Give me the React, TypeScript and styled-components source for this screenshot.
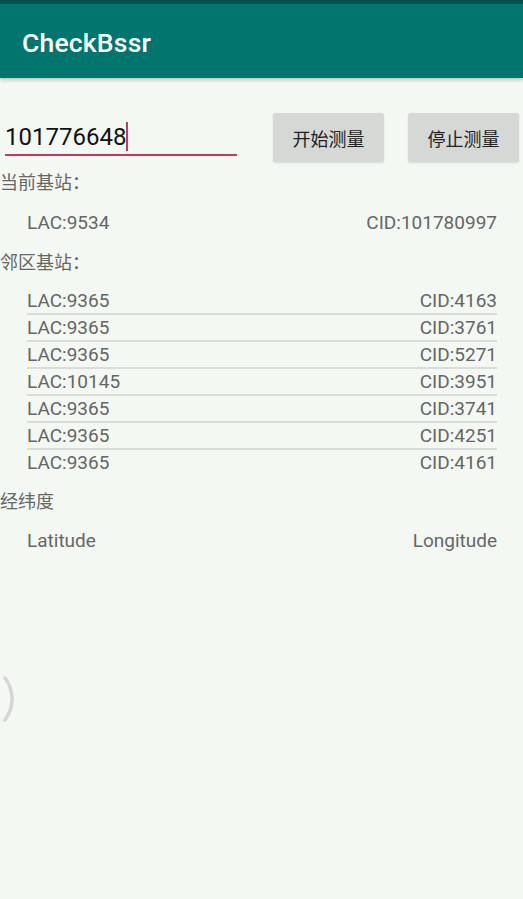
import React from 'react';
import styled, { createGlobalStyle } from 'styled-components';

const GlobalStyle = createGlobalStyle`
  html, body {
    margin: 0;
    padding: 0;
    background: #f3f8f3;
  }
  body {
    font-family: Roboto, "Noto Sans CJK SC", sans-serif;
  }
`;

const Screen = styled.div`
  width: 523px;
  min-height: 899px;
  background: #f3f8f3;
  display: flex;
  flex-direction: column;
`;

const StatusBar = styled.div`
  height: 4px;
  background: #00524c;
`;

const Toolbar = styled.header`
  height: 74px;
  background: #00766f;
  display: flex;
  align-items: center;
  padding: 2px 0 0 22px;
  box-sizing: border-box;
  box-shadow: 0 2px 4px rgba(0, 0, 0, 0.22);
`;

const Title = styled.h1`
  margin: 0;
  color: #ffffff;
  font-size: 26.5px;
  font-weight: 500;
  letter-spacing: 0.2px;
`;

const InputRow = styled.div`
  display: flex;
  align-items: flex-start;
  margin-top: 35px;
`;

const EditField = styled.div`
  margin-left: 5px;
  width: 232px;
  height: 43px;
  padding-top: 9px;
  box-sizing: border-box;
  border-bottom: 2px solid #c93565;
  display: flex;
  align-items: flex-start;
  font-size: 24px;
  line-height: 30px;
  color: #111;
`;

const Caret = styled.span`
  display: inline-block;
  width: 2px;
  height: 29px;
  margin-top: 0;
  background: #c93565;
`;

const ActionButton = styled.button<{ $gap: number }>`
  margin-left: ${(p) => p.$gap}px;
  width: 111px;
  height: 49px;
  border: none;
  border-radius: 2px;
  background: #d5d8d5;
  box-shadow: 0 1px 2px rgba(0, 0, 0, 0.12);
  font-family: Roboto, "Noto Sans CJK SC", sans-serif;
  font-size: 18px;
  color: #222;
  padding: 0;
`;

const SectionLabel = styled.div<{ $top: number }>`
  margin-top: ${(p) => p.$top}px;
  font-size: 18px;
  line-height: 24px;
  color: #666;
`;

const ValueRow = styled.div<{ $top?: number; $divider?: boolean }>`
  margin: ${(p) => p.$top ?? 0}px 26px 0 27px;
  display: flex;
  justify-content: space-between;
  font-size: 19px;
  line-height: 25px;
  color: #666;
  border-bottom: ${(p) => (p.$divider ? '2px solid #d9ddd9' : 'none')};
`;

const NeighborList = styled.div`
  margin-top: 13px;
  display: flex;
  flex-direction: column;
`;

const Spinner = styled.svg`
  margin-top: 117px;
  display: block;
`;

const neighbors = [
  ['9365', '4163'],
  ['9365', '3761'],
  ['9365', '5271'],
  ['10145', '3951'],
  ['9365', '3741'],
  ['9365', '4251'],
  ['9365', '4161'],
];

export default function App() {
  return (
    <Screen>
      <GlobalStyle />
      <StatusBar />
      <Toolbar>
        <Title>CheckBssr</Title>
      </Toolbar>
      <InputRow>
        <EditField>
          101776648
          <Caret />
        </EditField>
        <ActionButton $gap={36}>开始测量</ActionButton>
        <ActionButton $gap={24}>停止测量</ActionButton>
      </InputRow>
      <SectionLabel $top={9}>当前基站：</SectionLabel>
      <ValueRow $top={15}>
        <span>LAC:9534</span>
        <span>CID:101780997</span>
      </ValueRow>
      <SectionLabel $top={16}>邻区基站：</SectionLabel>
      <NeighborList>
        {neighbors.map(([lac, cid], i) => (
          <ValueRow key={i} $divider={i < neighbors.length - 1}>
            <span>LAC:{lac}</span>
            <span>CID:{cid}</span>
          </ValueRow>
        ))}
      </NeighborList>
      <SectionLabel $top={15}>经纬度</SectionLabel>
      <ValueRow $top={14}>
        <span>Latitude</span>
        <span>Longitude</span>
      </ValueRow>
      <Spinner width="20" height="56" viewBox="0 0 20 56">
        <path
          d="M5 8 A35 35 0 0 1 5 50"
          fill="none"
          stroke="#d3d6d3"
          strokeWidth="3.5"
          strokeLinecap="round"
        />
      </Spinner>
    </Screen>
  );
}
